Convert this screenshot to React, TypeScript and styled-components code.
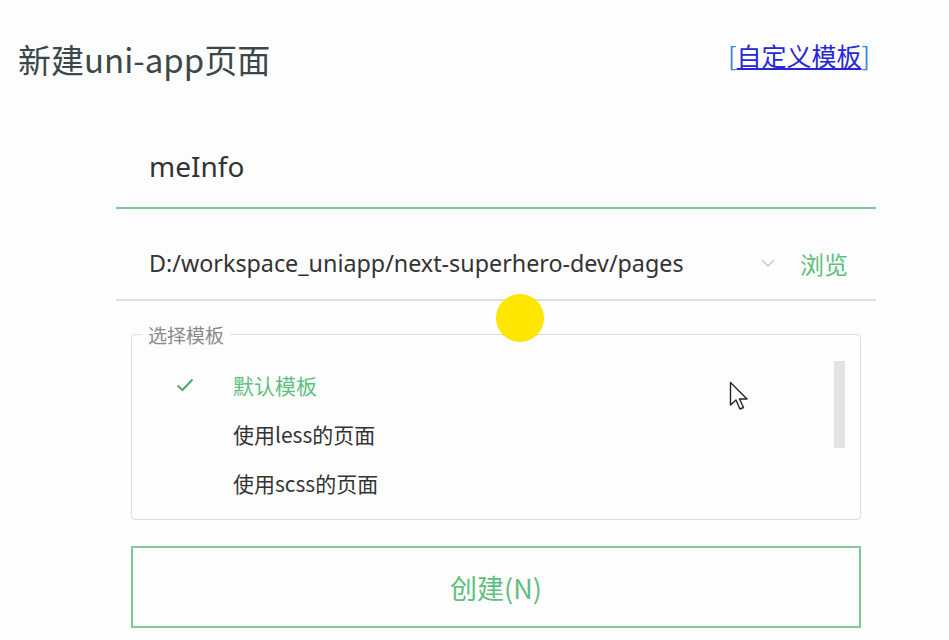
import React from "react"
import styled, { createGlobalStyle } from "styled-components"

const GlobalStyle = createGlobalStyle`
    html, body {
        margin: 0;
        padding: 0;
        background: #fdfdfd;
    }
    body {
        font-family: "Noto Sans", "Noto Sans CJK SC", sans-serif;
    }
`

const theme = {
    green: "#5fbf7f",
    greenLine: "#7fcb98",
    text: "#333333",
    title: "#3b4848",
    gray: "#8a8a8a",
    line: "#dedede",
}

const Page = styled.div`
    position: relative;
    width: 949px;
    height: 640px;
    overflow: hidden;
    background: #fdfdfd;
`

const Header = styled.div`
    display: flex;
    justify-content: space-between;
    align-items: center;
    padding: 35px 79px 0 18px;
`

const Title = styled.h1`
    margin: 0;
    font-size: 33px;
    font-weight: 400;
    color: ${theme.title};
    font-family: "Noto Sans CJK SC", sans-serif;
`

const TemplateLink = styled.a`
    margin-bottom: 8px;
    font-size: 25px;
    color: #2727d8;
    font-family: "Noto Sans CJK SC", sans-serif;
    span {
        text-decoration: underline;
    }
    b {
        font-weight: 400;
        color: #3a86d8;
    }
`

const Form = styled.div`
    width: 760px;
    margin: 54px 0 0 116px;
    display: flex;
    flex-direction: column;
`

const NameField = styled.div`
    height: 58px;
    padding: 0 0 12px 33px;
    display: flex;
    align-items: center;
    font-size: 28px;
    color: ${theme.text};
    border-bottom: 2px solid ${theme.greenLine};
`

const PathRow = styled.div`
    height: 72px;
    display: flex;
    align-items: center;
    padding: 18px 28px 0 33px;
    border-bottom: 2px solid ${theme.line};
`

const PathText = styled.div`
    flex: 1;
    font-size: 23.3px;
    color: ${theme.text};
`

const Chevron = styled.svg`
    width: 16px;
    height: 10px;
    margin-right: 24px;
`

const Browse = styled.span`
    font-size: 24px;
    color: ${theme.green};
    font-family: "Noto Sans CJK SC", sans-serif;
`

const TemplateBox = styled.fieldset`
    position: relative;
    margin: 20px 15px 0 15px;
    padding: 19px 0 34px 0;
    height: 144px;
    border: 1px solid ${theme.line};
    border-radius: 4px;
`

const Legend = styled.legend`
    margin-left: 10px;
    padding: 0 6px;
    font-size: 19px;
    color: ${theme.gray};
    font-family: "Noto Sans CJK SC", sans-serif;
`

const OptionList = styled.ul`
    list-style: none;
    margin: 0;
    padding: 0;
    display: flex;
    flex-direction: column;
    gap: 14px;
`

const Option = styled.li<{ $active?: boolean }>`
    display: flex;
    align-items: center;
    height: 35px;
    font-size: 21px;
    font-family: "Noto Sans CJK SC", sans-serif;
    color: ${p => (p.$active ? theme.green : theme.text)};
`

const CheckSlot = styled.span`
    width: 101px;
    padding-left: 44px;
    box-sizing: border-box;
    display: flex;
`

const Scrollbar = styled.div`
    position: absolute;
    right: 15px;
    top: 13px;
    width: 11px;
    height: 87px;
    background: #e3e3e3;
`

const CreateButton = styled.button`
    margin: 26px 15px 0 15px;
    height: 82px;
    background: transparent;
    border: 2px solid ${theme.greenLine};
    font-size: 27px;
    color: ${theme.green};
    font-family: "Noto Sans CJK SC", sans-serif;
    cursor: pointer;
`

const Highlight = styled.div`
    position: absolute;
    left: 496px;
    top: 294px;
    width: 48px;
    height: 48px;
    border-radius: 50%;
    background: #ffe600;
`

const Cursor = styled.svg`
    position: absolute;
    left: 729px;
    top: 381px;
    width: 22px;
    height: 32px;
`

const options = [
    { label: "默认模板", active: true },
    { label: "使用less的页面" },
    { label: "使用scss的页面" },
]

export default function App() {
    return (
        <Page>
            <GlobalStyle />
            <Header>
                <Title>新建uni-app页面</Title>
                <TemplateLink><b>[</b><span>自定义模板</span><b>]</b></TemplateLink>
            </Header>
            <Form>
                <NameField>meInfo</NameField>
                <PathRow>
                    <PathText>D:/workspace_uniapp/next-superhero-dev/pages</PathText>
                    <Chevron viewBox="0 0 16 10">
                        <path d="M2 2 L8 8 L14 2" fill="none" stroke="#c8c8c8" strokeWidth="1.5" />
                    </Chevron>
                    <Browse>浏览</Browse>
                </PathRow>
                <TemplateBox>
                    <Legend>选择模板</Legend>
                    <OptionList>
                        {options.map(o => (
                            <Option key={o.label} $active={o.active}>
                                <CheckSlot>
                                    {o.active && (
                                        <svg width="18" height="14" viewBox="0 0 18 14">
                                            <path d="M1.5 7.5 L6.5 12 L16.5 1.5" fill="none" stroke="#4fa874" strokeWidth="2" />
                                        </svg>
                                    )}
                                </CheckSlot>
                                {o.label}
                            </Option>
                        ))}
                    </OptionList>
                    <Scrollbar />
                </TemplateBox>
                <CreateButton>创建(N)</CreateButton>
            </Form>
            <Highlight />
            <Cursor viewBox="0 0 22 32">
                <path d="M1.5 1.5 L1.5 24 L7 19 L11 28 L14.5 26.5 L10.5 18 L18 18 Z" fill="#ffffff" stroke="#222" strokeWidth="1.4" strokeLinejoin="round" />
            </Cursor>
        </Page>
    )
}
